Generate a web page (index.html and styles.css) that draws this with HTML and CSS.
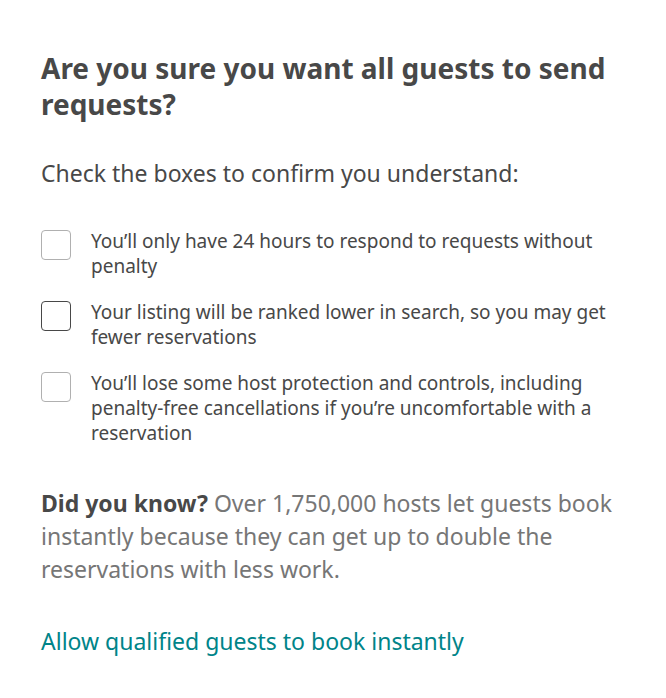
FILE: index.html
```html
<!DOCTYPE html>
<html lang="en">
<head>
<meta charset="utf-8">
<link rel="stylesheet" href="styles.css">
</head>
<body>
<main class="panel">
  <h1 class="title">Are you sure you want all guests to send requests?</h1>
  <p class="lead">Check the boxes to confirm you understand:</p>
  <ul class="checks">
    <li class="check">
      <span class="box"></span>
      <span class="label">You’ll only have 24 hours to respond to requests without penalty</span>
    </li>
    <li class="check">
      <span class="box box-dark"></span>
      <span class="label">Your listing will be ranked lower in search, so you may get fewer reservations</span>
    </li>
    <li class="check">
      <span class="box"></span>
      <span class="label">You’ll lose some host protection and controls, including penalty-free cancellations if you’re uncomfortable with a reservation</span>
    </li>
  </ul>
  <p class="tip"><strong class="tip-lead">Did you know?</strong> Over 1,750,000 hosts let guests book instantly because they can get up to double the reservations with less work.</p>
  <a class="link" href="#">Allow qualified guests to book instantly</a>
</main>
</body>
</html>
```
FILE: styles.css
```css
html, body {
  margin: 0;
  padding: 0;
  background: #ffffff;
}
body {
  font-family: "Noto Sans", "Open Sans", sans-serif;
  color: #484848;
}
.panel {
  padding: 50px 41px 0 41px;
  display: flex;
  flex-direction: column;
  align-items: flex-start;
}
.title {
  margin: 0;
  font-size: 28px;
  line-height: 36px;
  font-weight: 700;
  color: #484848;
  max-width: 584px;
}
.lead {
  margin: 37px 0 0 0;
  font-size: 23px;
  line-height: 28px;
}
.checks {
  list-style: none;
  margin: 42px 0 0 0;
  padding: 0;
  display: flex;
  flex-direction: column;
  gap: 21px;
}
.check {
  display: flex;
  align-items: flex-start;
  gap: 20px;
}
.box {
  flex: none;
  width: 28px;
  height: 28px;
  border: 1px solid #b0b0b0;
  border-radius: 4px;
  margin-top: 1px;
}
.box-dark {
  border-color: #484848;
}
.label {
  font-size: 19px;
  line-height: 25px;
  max-width: 530px;
}
.tip {
  margin: 41px 0 0 0;
  font-size: 23px;
  line-height: 33px;
  color: #767676;
}
.tip-lead {
  color: #484848;
  font-weight: 700;
}
.link {
  margin-top: 39px;
  font-size: 23px;
  line-height: 33px;
  color: #008489;
  text-decoration: none;
}
```
